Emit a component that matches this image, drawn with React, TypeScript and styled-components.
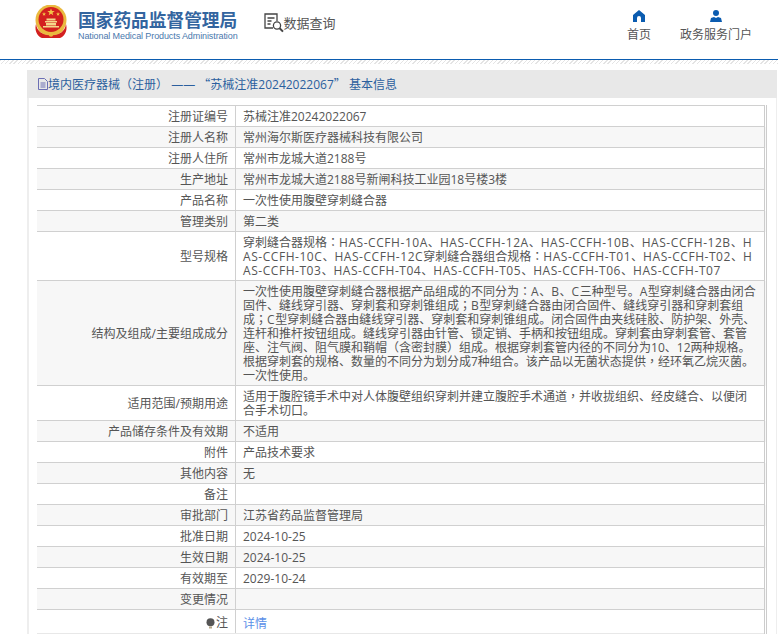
import React from "react";
import styled, { createGlobalStyle } from "styled-components";

const GlobalStyle = createGlobalStyle`
  html, body {
    margin: 0;
    padding: 0;
    background: #fff;
    overflow: hidden;
  }
  body {
    font-family: "Open Sans", "Noto Sans CJK SC", sans-serif;
    font-size: 12px;
    color: #555;
  }
`;

const Page = styled.div`
  width: 778px;
  height: 640px;
  overflow: hidden;
`;

const Header = styled.header`
  display: flex;
  align-items: flex-start;
  height: 59px;
  padding-left: 35px;
  border-bottom: 1px solid #0b5cb0;
`;

const LogoWrap = styled.div`
  display: flex;
  gap: 11px;
  padding-top: 5px;
`;

const LogoText = styled.div`
  display: flex;
  flex-direction: column;
  padding-top: 4px;
`;

const LogoTitle = styled.div`
  font-family: "Noto Sans CJK SC", sans-serif;
  font-size: 17.7px;
  line-height: 20px;
  font-weight: 700;
  color: #33659f;
  white-space: nowrap;
`;

const LogoSub = styled.div`
  font-family: "Liberation Sans", sans-serif;
  font-size: 9px;
  line-height: 12px;
  margin-top: 1px;
  letter-spacing: -0.1px;
  color: #4a78ad;
  white-space: nowrap;
`;

const SearchTitle = styled.div`
  display: flex;
  align-items: center;
  margin: 13px 0 0 26px;
  font-size: 13px;
  line-height: 20px;
  color: #555;
`;

const Nav = styled.nav`
  display: flex;
  margin-left: auto;
  padding: 10px 26px 0 0;
  gap: 29px;
`;

const NavItem = styled.div`
  display: flex;
  flex-direction: column;
  align-items: center;
  gap: 5px;
  color: #555;
  line-height: 16px;
`;

const Strip = styled.div`
  height: 4px;
  background: repeating-linear-gradient(135deg, #e4e4e4 0 1px, #fff 1px 3px);
`;

const Panel = styled.main`
  width: 747px;
  margin: 6px 0 0 27px;
  background: #fff;
  border: solid #eee;
  border-width: 0 1px 0 2px;
`;

const TitleBar = styled.div`
  display: flex;
  align-items: center;
  height: 28px;
  margin-left: -2px;
  margin-right: -1px;
  padding-left: 11px;
  background: #e8e8e8;
  color: #2b5f9e;
  font-size: 12px;
  white-space: pre;
`;

const Table = styled.table`
  width: 730px;
  margin: 7px 0 0 8px;
  border-collapse: collapse;
  table-layout: fixed;
  line-height: 14px;
`;

const Row = styled.tr<{ $alt: boolean }>`
  background: ${({ $alt }) => ($alt ? "#f7f7f7" : "#fff")};
`;

const Label = styled.td<{ $last?: boolean }>`
  width: 191px;
  height: 14px;
  padding: ${({ $last }) => ($last ? "6px 7px 1px 0" : "4px 7px 2px 0")};
  text-align: right;
  vertical-align: middle;
  border: 1px solid #d0d0d0;
  border-width: 1px 1px 1px 0;
  border-bottom-color: ${({ $last }) => ($last ? "#e8e8e8" : "#d0d0d0")};
`;

const Value = styled.td<{ $last?: boolean }>`
  padding: ${({ $last }) => ($last ? "6px 7px 1px 7px" : "4px 7px 2px 7px")};
  border: 1px solid #d0d0d0;
  border-right: 3px double #ccc;
  border-bottom-color: ${({ $last }) => ($last ? "#e8e8e8" : "#d0d0d0")};
  word-break: break-all;
  vertical-align: middle;
`;

const Latin = styled.span`
  letter-spacing: 0.55px;
`;

const Punct = styled.span`
  font-family: "Noto Sans CJK TC", sans-serif;
  line-height: 0;
`;

const Keep = styled.span`
  white-space: nowrap;
`;

const DetailLink = styled.a`
  color: #5b8fe8;
  text-decoration: none;
`;

const Tip = styled.span`
  display: inline-flex;
  align-items: center;
  gap: 1px;
`;

const rows: [string, string][] = [
  ["注册证编号", "苏械注准20242022067"],
  ["注册人名称", "常州海尔斯医疗器械科技有限公司"],
  ["注册人住所", "常州市龙城大道2188号"],
  ["生产地址", "常州市龙城大道2188号新闸科技工业园18号楼3楼"],
  ["产品名称", "一次性使用腹壁穿刺缝合器"],
  ["管理类别", "第二类"],
  [
    "型号规格",
    "穿刺缝合器规格：HAS-CCFH-10A、HAS-CCFH-12A、HAS-CCFH-10B、HAS-CCFH-12B、HAS-CCFH-10C、HAS-CCFH-12C穿刺缝合器组合规格：HAS-CCFH-T01、HAS-CCFH-T02、HAS-CCFH-T03、HAS-CCFH-T04、HAS-CCFH-T05、HAS-CCFH-T06、HAS-CCFH-T07",
  ],
  [
    "结构及组成/主要组成成分",
    "一次性使用腹壁穿刺缝合器根据产品组成的不同分为：A、B、C三种型号。A型穿刺缝合器由闭合固件、缝线穿引器、穿刺套和穿刺锥组成；B型穿刺缝合器由闭合固件、缝线穿引器和穿刺套组成；C型穿刺缝合器由缝线穿引器、穿刺套和穿刺锥组成。闭合固件由夹线硅胶、防护架、外壳、连杆和推杆按钮组成。缝线穿引器由针管、锁定销、手柄和按钮组成。穿刺套由穿刺套管、套管座、注气阀、阻气膜和鞘帽（含密封膜）组成。根据穿刺套管内径的不同分为10、12两种规格。根据穿刺套的规格、数量的不同分为划分成7种组合。该产品以无菌状态提供，经环氧乙烷灭菌。一次性使用。",
  ],
  [
    "适用范围/预期用途",
    "适用于腹腔镜手术中对人体腹壁组织穿刺并建立腹腔手术通道，并收拢组织、经皮缝合、以便闭合手术切口。",
  ],
  ["产品储存条件及有效期", "不适用"],
  ["附件", "产品技术要求"],
  ["其他内容", "无"],
  ["备注", ""],
  ["审批部门", "江苏省药品监督管理局"],
  ["批准日期", "2024-10-25"],
  ["生效日期", "2024-10-25"],
  ["有效期至", "2029-10-24"],
  ["变更情况", ""],
];

// the original font has wider capitals and centred full-width punctuation
// closing punctuation stays on the line of the character before it
const renderText = (text: string) =>
  text.split(/(.[：，；）]|（|[A-Za-z][A-Za-z0-9-]*)/).map((part, i) => {
    if (/^.[：，；）]$/.test(part)) {
      return (
        <Keep key={i}>
          {part[0]}
          <Punct>{part[1]}</Punct>
        </Keep>
      );
    }
    if (part === "（") return <Punct key={i}>{part}</Punct>;
    if (/^[A-Za-z]/.test(part)) return <Latin key={i}>{part}</Latin>;
    return part;
  });

const Emblem = () => (
  <svg width="32" height="34" viewBox="0 0 32 34">
    <circle cx="16" cy="15" r="15.5" fill="#eab93f" />
    <circle cx="16" cy="14.5" r="12.5" fill="#d3201f" />
    <path d="M16 3.5l1 2.6h2.7l-2.2 1.6.8 2.6-2.3-1.6-2.3 1.6.8-2.6-2.2-1.6H15z" fill="#f3c648" />
    <path d="M9 7l.6 1.4h1.5l-1.2.9.4 1.4L9 9.9l-1.2.8.4-1.4-1.2-.9h1.5zM23 7l.6 1.4h1.5l-1.2.9.4 1.4-1.3-.8-1.2.8.4-1.4-1.2-.9h1.5z" fill="#f3c648" />
    <path d="M11.5 13.5h9v2h-9zM10 16h12v1.5H10zM11 18h10v2.5H11zM8 21h16v1.5H8z" fill="#f5d78a" />
    <path d="M1 19c1 7 6 11 15 11s14-4 15-11c2 7-2 13-6 14H7C3 32-1 26 1 19z" fill="#d3201f" />
    <path d="M4 24c3 4.500 7 5.500 12 5.500s9-1 12-5.500" fill="none" stroke="#eab93f" strokeWidth="2" />
    <circle cx="16" cy="29.500" r="2.200" fill="#eab93f" />
  </svg>
);

const SearchIcon = () => (
  <svg width="20" height="20" viewBox="0 0 20 20" fill="none" stroke="#444" strokeWidth="1.3">
    <path d="M9 15H1V1h12v7" />
    <path d="M3.500 5h7M3.500 8h4M3.500 11h3" />
    <circle cx="13" cy="12.500" r="3.600" />
    <path d="M15.600 15.200l3.400 3.400" strokeWidth="2" />
  </svg>
);

const HomeIcon = () => (
  <svg width="12" height="12" viewBox="0 0 12 12" fill="#0b5cb0">
    <path d="M6 0L12 5v7H8V8a2 2 0 0 0-4 0v4H0V5z" />
  </svg>
);

const UserIcon = () => (
  <svg width="12" height="12" viewBox="0 0 12 12" fill="#0b5cb0">
    <circle cx="6" cy="3" r="3" />
    <path d="M0 12l1-4 3-1 2 1 2-1 3 1 1 4z" />
  </svg>
);

const DocIcon = () => (
  <svg width="10" height="12" viewBox="0 0 10 12" fill="none" stroke="#6c6fb4" strokeWidth="1">
    <path d="M.5.5h6l3 3v8h-9zM2.500 5h5M2.500 7h5M2.500 9h5" />
  </svg>
);

const BulbIcon = () => (
  <svg width="9" height="11" viewBox="0 0 9 11" fill="#555">
    <circle cx="4.500" cy="4.200" r="4" />
    <path d="M3 8.500h3V10.500H3z" fill="#b8a888" />
  </svg>
);

export default function App() {
  return (
    <Page>
      <GlobalStyle />
      <Header>
        <LogoWrap>
          <Emblem />
          <LogoText>
            <LogoTitle>国家药品监督管理局</LogoTitle>
            <LogoSub>National Medical Products Administration</LogoSub>
          </LogoText>
        </LogoWrap>
        <SearchTitle>
          <SearchIcon />
          数据查询
        </SearchTitle>
        <Nav>
          <NavItem>
            <HomeIcon />
            首页
          </NavItem>
          <NavItem>
            <UserIcon />
            政务服务门户
          </NavItem>
        </Nav>
      </Header>
      <Strip />
      <Panel>
        <TitleBar>
          <DocIcon />
          境内医疗器械<Punct>（</Punct>注册<Punct>）</Punct> —— <Punct>“</Punct>苏械注准20242022067<Punct>”</Punct> 基本信息
        </TitleBar>
        <Table>
          <tbody>
            {rows.map(([label, value], i) => (
              <Row key={label} $alt={i % 2 === 1}>
                <Label>{label}</Label>
                <Value>{renderText(value)}</Value>
              </Row>
            ))}
            <Row $alt={false}>
              <Label $last>
                <Tip>
                  <BulbIcon />注
                </Tip>
              </Label>
              <Value $last>
                <DetailLink href="#">详情</DetailLink>
              </Value>
            </Row>
          </tbody>
        </Table>
      </Panel>
    </Page>
  );
}
